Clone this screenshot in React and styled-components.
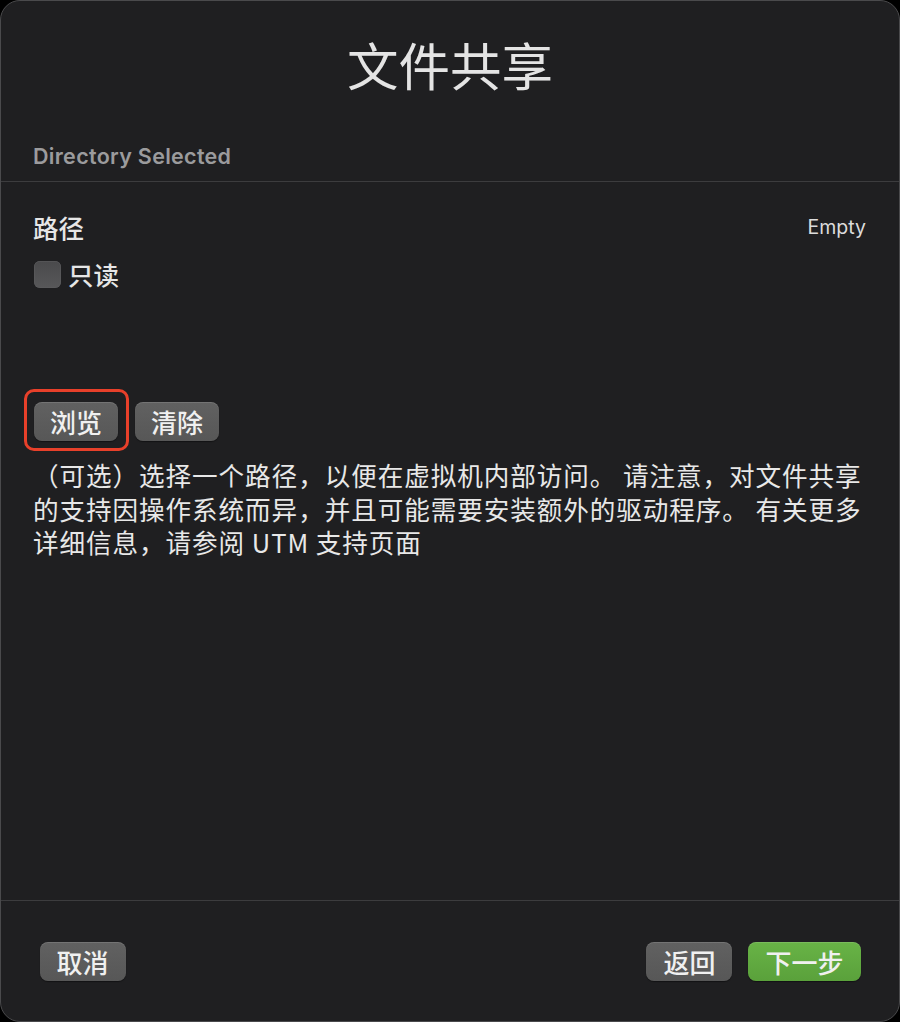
import React from "react";
import styled, { createGlobalStyle } from "styled-components";

const Global = createGlobalStyle`
  html, body { margin: 0; padding: 0; background: #000; }
  body { font-family: "Noto Sans CJK SC", "Noto Sans", sans-serif; }
  * { box-sizing: border-box; }
`;

const Window = styled.div`
  width: 900px;
  height: 1022px;
  background: #1f1f21;
  border: 1.5px solid #4a4a4c;
  border-radius: 20px;
  display: flex;
  flex-direction: column;
  overflow: hidden;
  color: #e6e6e6;
`;

const Title = styled.h1`
  margin: 37px 0 0;
  font-family: "Noto Sans CJK SC", sans-serif;
  font-weight: 400;
  font-size: 51.5px;
  line-height: 52px;
  text-align: center;
  color: #e4e4e4;
`;

const SectionLabel = styled.div`
  margin: 54px 0 0;
  padding: 0 32px;
  font-family: Inter, "Noto Sans", sans-serif;
  font-weight: 600;
  font-size: 21.5px;
  line-height: 24px;
  letter-spacing: 0.3px;
  color: #9b9b9d;
`;

const Divider = styled.div`
  flex: none;
  height: 1px;
  background: #3c3c3e;
  margin-top: ${(p) => (p.$auto ? "auto" : `${p.$top || 0}px`)};
`;

const Content = styled.div`
  padding: 30px 32px 0 32px;
  display: flex;
  flex-direction: column;
`;

const Row = styled.div`
  display: flex;
  align-items: center;
  justify-content: space-between;
  height: 30px;
`;

const FieldLabel = styled.span`
  font-size: 25.5px;
  font-weight: 500;
  line-height: 30px;
  color: #e6e6e6;
`;

const Value = styled.span`
  font-family: Inter, "Noto Sans", sans-serif;
  font-size: 19.5px;
  color: #dcdcdc;
  margin-right: 1px;
`;

const CheckRow = styled.label`
  display: flex;
  align-items: center;
  gap: 7px;
  height: 30px;
  margin-top: 17px;
`;

const Checkbox = styled.span`
  display: inline-block;
  width: 27px;
  height: 27px;
  margin-left: 1px;
  border-radius: 6px;
  background: linear-gradient(#4a4a4c, #575759);
  box-shadow: inset 0 0 0 0.5px #5e5e60;
`;

const ButtonRow = styled.div`
  display: flex;
  gap: 17px;
  margin-top: 113px;
  margin-left: 1px;
`;

const Button = styled.button`
  position: relative;
  height: 39px;
  padding: 0 ${(p) => p.$pad || 16}px;
  border: none;
  border-radius: 8px;
  background: ${(p) =>
    p.$primary
      ? "linear-gradient(#68b346, #5aa13b)"
      : "linear-gradient(#616161, #575757)"};
  box-shadow: inset 0 1px 0 rgba(255, 255, 255, 0.12), 0 1px 1px rgba(0, 0, 0, 0.4);
  color: #f0f0f0;
  font-family: "Noto Sans CJK SC", sans-serif;
  font-size: 26px;
  font-weight: 500;
  line-height: 39px;
  cursor: pointer;

  ${(p) =>
    p.$highlight &&
    `
    &::after {
      content: "";
      position: absolute;
      top: -13px;
      left: -10px;
      right: -11px;
      bottom: -10px;
      border: 3.5px solid #e8402a;
      border-radius: 10px;
      pointer-events: none;
    }
  `}
`;

const Description = styled.p`
  margin: 17px 0 0;
  width: 840px;
  font-size: 25.6px;
  line-height: 33.5px;
  letter-spacing: 0.92px;
  color: #e8e8e8;
`;

const Footer = styled.div`
  flex: none;
  height: 120px;
  display: flex;
  align-items: center;
  justify-content: space-between;
  padding: 0 38.5px 0 38.5px;
`;

const Group = styled.div`
  display: flex;
  gap: 16px;
`;

export default function App() {
  return (
    <>
      <Global />
      <Window>
        <Title>文件共享</Title>
        <SectionLabel>Directory Selected</SectionLabel>
        <Divider $top={13} />
        <Content>
          <Row>
            <FieldLabel>路径</FieldLabel>
            <Value>Empty</Value>
          </Row>
          <CheckRow>
            <Checkbox />
            <FieldLabel>只读</FieldLabel>
          </CheckRow>
          <ButtonRow>
            <Button $highlight>浏览</Button>
            <Button>清除</Button>
          </ButtonRow>
          <Description>
            （可选）选择一个路径，以便在虚拟机内部访问。 请注意，对文件共享的支持因操作系统而异，并且可能需要安装额外的驱动程序。 有关更多详细信息，请参阅 UTM 支持页面
          </Description>
        </Content>
        <Divider $auto />
        <Footer>
          <Button $pad={17}>取消</Button>
          <Group>
            <Button $pad={17}>返回</Button>
            <Button $pad={17} $primary>下一步</Button>
          </Group>
        </Footer>
      </Window>
    </>
  );
}
